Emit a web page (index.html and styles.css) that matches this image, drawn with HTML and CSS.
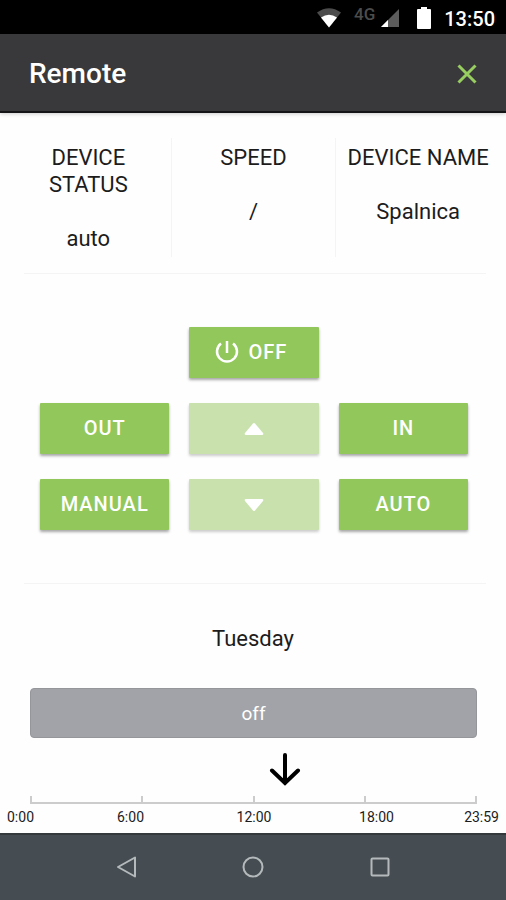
FILE: index.html
```html
<!DOCTYPE html>
<html lang="en">
<head>
<meta charset="utf-8">
<meta name="viewport" content="width=device-width, initial-scale=1">
<title>Remote</title>
<link rel="stylesheet" href="styles.css">
</head>
<body>
<div class="status-bar">
  <svg class="wifi" width="24" height="20" viewBox="0 0 24 20"><path fill="#4c4c4c" d="M0 4.500Q12-4 24 4.500L12 19.500Z"/><path fill="#fff" d="M4 9.500Q12 4 20 9.500L12 19.500Z"/></svg>
  <span class="network">4G</span>
  <svg class="signal" width="18" height="18" viewBox="0 0 18 18"><path fill="#5c5c5c" d="M18 0V18H0Z"/><path fill="#fff" d="M7 11V18H0Z"/></svg>
  <svg class="battery" width="14" height="22" viewBox="0 0 14 22"><path fill="#fff" d="M4 0h6v2h3q1 0 1 1v18q0 1-1 1H1q-1 0-1-1V3q0-1 1-1h3z"/></svg>
  <span class="clock">13:50</span>
</div>
<header class="app-header">
  <h1>Remote</h1>
  <button class="close" aria-label="Close"><svg width="20" height="20" viewBox="0 0 20 20" fill="none" stroke="#98cd60" stroke-width="3"><path d="M1.500 1.500l17 17M18.500 1.500l-17 17"/></svg></button>
</header>
<main>
  <section class="info">
    <div class="info-cell"><h2>DEVICE STATUS</h2><p>auto</p></div>
    <div class="info-cell"><h2>SPEED</h2><p>/</p></div>
    <div class="info-cell"><h2>DEVICE NAME</h2><p>Spalnica</p></div>
  </section>
  <hr>
  <section class="controls">
    <button class="btn power"><svg width="24" height="24" viewBox="0 0 24 24" fill="none" stroke="#fff" stroke-width="2.500"><path d="M12 1v12M6 3.500a10 10 0 1 0 12 0"/></svg>OFF</button>
    <button class="btn">OUT</button>
    <button class="btn" disabled aria-label="Speed up"><svg width="20" height="12" viewBox="0 0 20 12"><path fill="#fff" d="M10 0Q10.500 0 11 .5L19 10Q20 12 18 12H2Q0 12 1 10L9 .5Q9.500 0 10 0Z"/></svg></button>
    <button class="btn">IN</button>
    <button class="btn">MANUAL</button>
    <button class="btn" disabled aria-label="Speed down"><svg width="20" height="12" viewBox="0 0 20 12"><path fill="#fff" d="M10 12Q10.500 12 11 11.500L19 2Q20 0 18 0H2Q0 0 1 2L9 11.500Q9.500 12 10 12Z"/></svg></button>
    <button class="btn">AUTO</button>
  </section>
  <hr>
  <section class="schedule">
    <h2>Tuesday</h2>
    <button class="slot">off</button>
    <div class="track">
      <svg class="now" width="32" height="34" viewBox="0 0 32 34" fill="none" stroke="#000" stroke-width="4" stroke-linecap="round"><path d="M16 3v28M3 18.500l13 12.500 13-12.500"/></svg>
    </div>
    <div class="axis"><i></i><i></i><i></i><i></i><i></i></div>
    <div class="hours"><span>0:00</span><span>6:00</span><span>12:00</span><span>18:00</span><span>23:59</span></div>
  </section>
</main>
<nav class="nav-bar">
  <button aria-label="Back"><svg width="24" height="24" viewBox="0 0 24 24"><path d="M20 2.500v19L3 12z"/></svg></button>
  <button aria-label="Home"><svg width="24" height="24" viewBox="0 0 24 24"><circle cx="12" cy="12" r="9.500"/></svg></button>
  <button aria-label="Recent apps"><svg width="24" height="24" viewBox="0 0 24 24"><rect x="3.500" y="3.500" width="17" height="17" rx="1"/></svg></button>
</nav>
</body>
</html>
```
FILE: styles.css
```css
* { box-sizing: border-box; }
body {
  margin: 0;
  min-height: 100vh;
  display: flex;
  flex-direction: column;
  background: #fefefe;
  color: #1c1c1c;
  font-family: Roboto, sans-serif;
}
h1, h2, p { margin: 0; font-weight: 400; }
button { border: 0; padding: 0; background: none; font: inherit; color: inherit; }
svg { display: block; }

.status-bar {
  height: 34px;
  padding: 2px 11px 0;
  display: flex;
  align-items: center;
  justify-content: flex-end;
  background: #000;
  color: #fff;
}
.network { margin: 0 6px 8px 13px; font-size: 17px; line-height: 20px; font-weight: 500; color: #4c4c4c; }
.battery { margin: 0 13px 0 18px; }
.clock { font-size: 20px; font-weight: 500; line-height: 32px; padding-top: 2px; }

.app-header {
  height: 79px;
  padding: 2px 29px 0;
  display: flex;
  align-items: center;
  justify-content: space-between;
  background: #39393c;
  border-bottom: 2px solid #151517;
  box-shadow: 0 1px 4px rgba(0, 0, 0, .2);
  color: #fff;
}
.app-header h1 { font-size: 28px; line-height: 36px; font-weight: 500; }

main { flex: 1; }
hr { height: 1px; margin: 0 20px 0 24px; border: 0; background: #f4f4f4; }

.info {
  display: grid;
  grid-template-columns: repeat(3, 1fr);
  padding: 25px 6px 16px;
  text-align: center;
  font-size: 22px;
  line-height: 27px;
}
.info-cell { padding: 6px 8px 5px; }
.info-cell + .info-cell { border-left: 1px solid #f4f4f4; }
.info h2 { font-size: 22px; margin-bottom: 27px; }

.controls {
  display: grid;
  grid-template-columns: repeat(3, 1fr);
  gap: 25px 20px;
  padding: 53px 38px 53px 40px;
}
.btn {
  height: 51px;
  padding-bottom: 2px;
  display: flex;
  align-items: center;
  justify-content: center;
  gap: 10px;
  border-radius: 1px;
  background: #92c75b;
  box-shadow: 0 2px 3px rgba(0, 0, 0, .35);
  color: #fff;
  font-size: 20px;
  font-weight: 500;
  letter-spacing: 1px;
}
.btn:disabled { padding-bottom: 0; background: #c9e2ad; box-shadow: 0 2px 3px rgba(0, 0, 0, .2); }
.power { grid-column: 2; padding-right: 6px; }
.controls .power + .btn { grid-column: 1; }

.schedule { padding: 41px 0 6px; }
.schedule h2 { text-align: center; font-size: 22px; line-height: 28px; }
.slot {
  display: block;
  width: calc(100% - 59px);
  height: 50px;
  margin: 35px 29px 0 30px;
  border-radius: 4px;
  background: #a2a3a8;
  border: 1px solid #95969a;
  color: #fff;
  font-size: 19px;
}
.track { margin: 14px 29px 0 30px; }
.now { margin-left: 57%; transform: translateX(-50%); }
.axis {
  display: flex;
  justify-content: space-between;
  height: 8px;
  margin: 10px 29px 0 30px;
  border-bottom: 2px solid #ccc;
}
.axis i { width: 2px; background: #ccc; }
.hours {
  display: grid;
  grid-template-columns: 27fr 193fr 54fr 191fr minmax(0, 27fr);
  justify-items: center;
  margin: 4px 7px 0;
  font-size: 14px;
  line-height: 18px;
}
.hours span:last-child { justify-self: end; }

.nav-bar {
  display: flex;
  height: 67px;
  padding: 0 63px 2px 64px;
  background: #464d52;
  border-top: 2px solid #34393c;
}
.nav-bar button { flex: 1; display: flex; align-items: center; justify-content: center; }
.nav-bar svg { fill: none; stroke: #b4babc; stroke-width: 2; stroke-linejoin: round; }
```
